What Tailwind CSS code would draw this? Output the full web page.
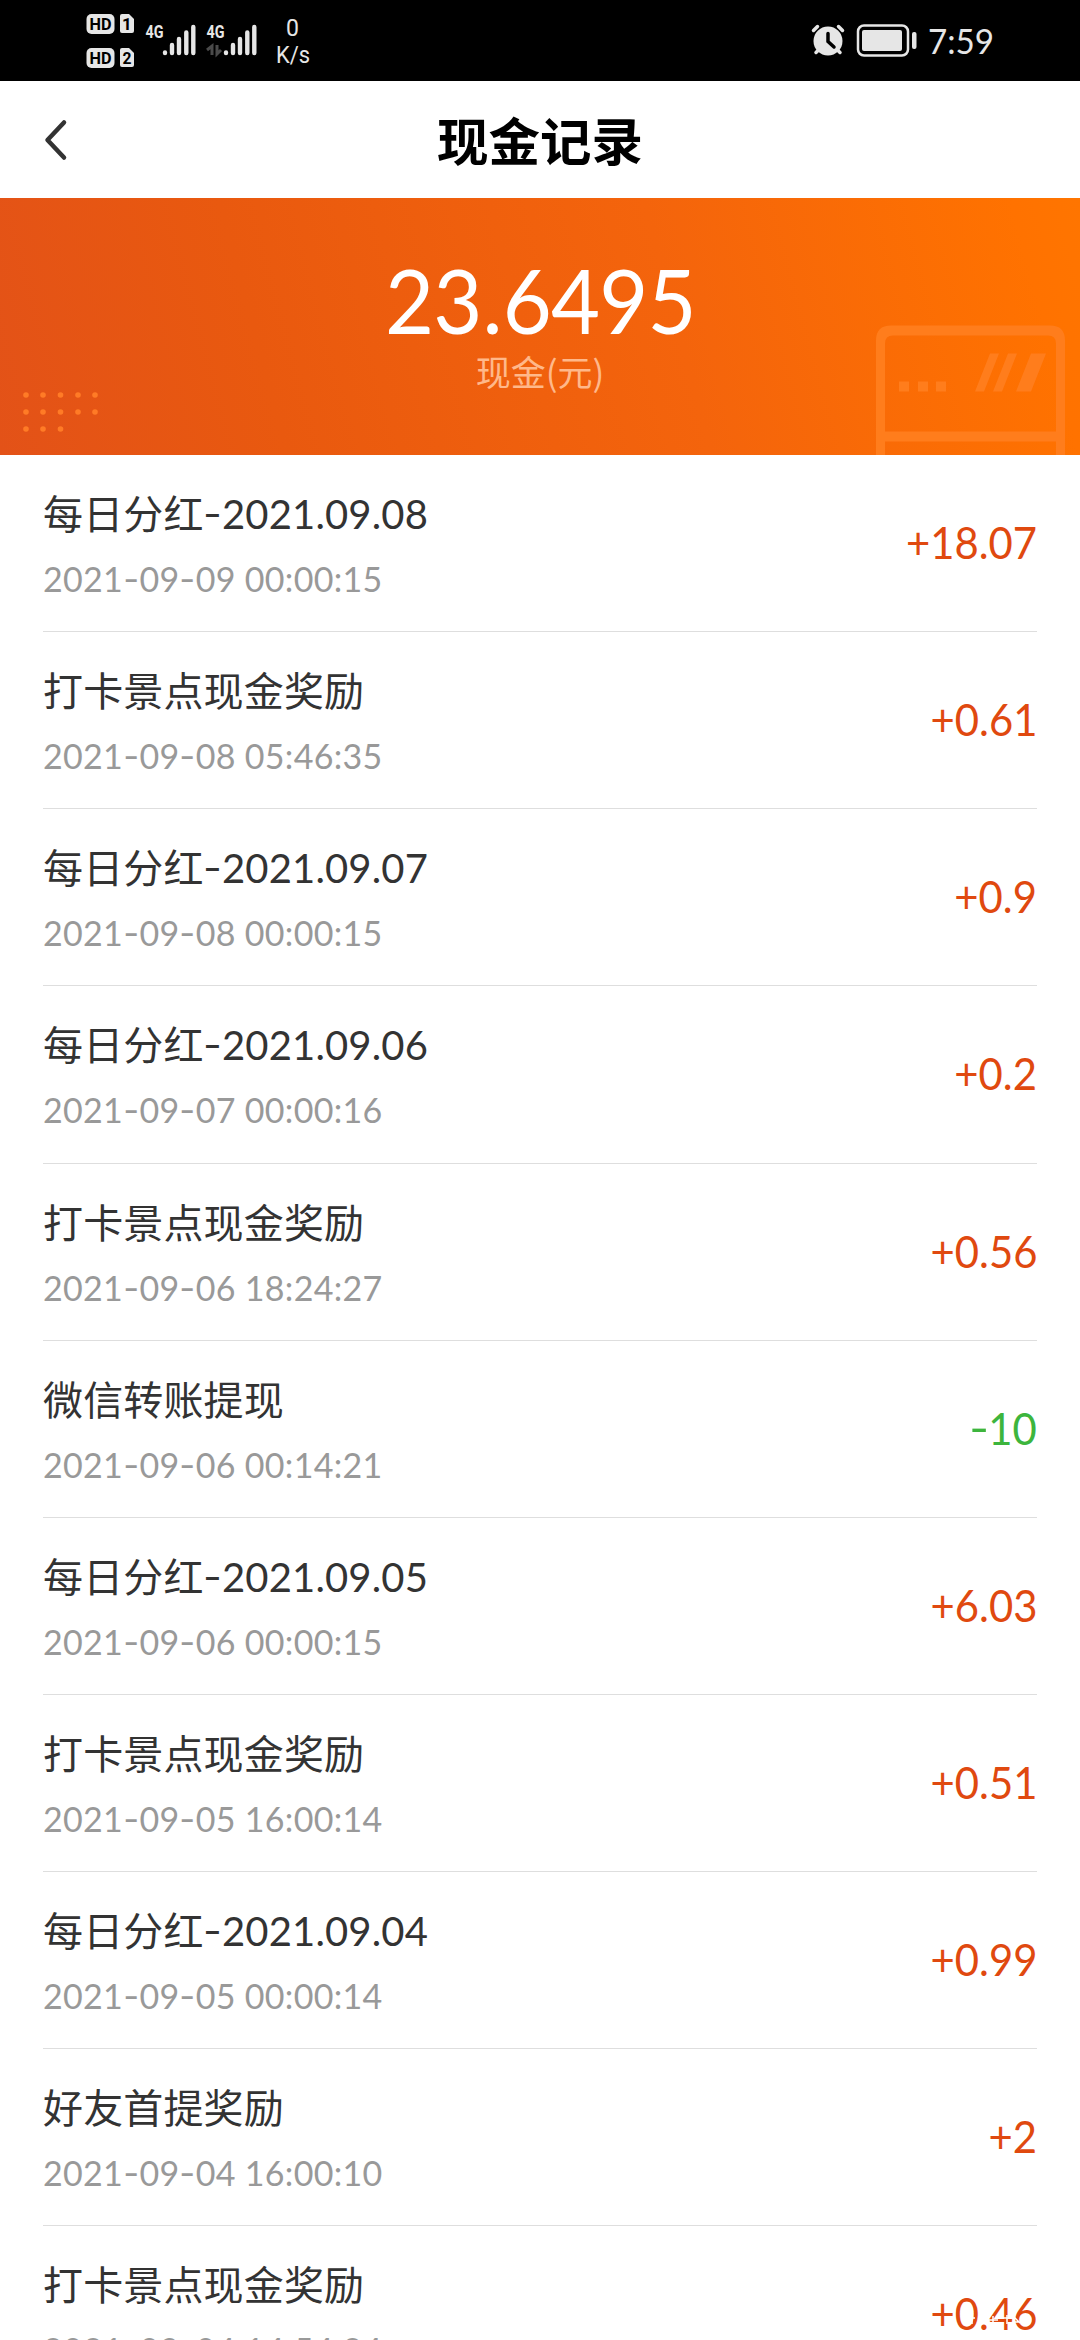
<!DOCTYPE html>
<html lang="zh-CN">
<head>
<meta charset="utf-8">
<title>现金记录</title>
<script src="https://cdn.jsdelivr.net/npm/@tailwindcss/browser@4"></script>
</head>
<body class="w-[1080px] h-[2340px] overflow-hidden bg-white font-['Lato','Noto_Sans_CJK_SC',sans-serif]">
<div class="relative w-[1080px] h-[2340px] overflow-hidden flex flex-col">
  <div class="h-[81px] shrink-0 bg-black">
    <svg class="block" width="1080" height="81" viewBox="0 0 1080 81" fill="#e6e6e6">
      <!-- HD / SIM badges -->
      <rect x="86.500" y="14" width="28" height="20" rx="5"/>
      <rect x="86.500" y="48" width="28" height="20" rx="5"/>
      <path d="M122 14h7l5 5v12a2 2 0 0 1-2 2h-10a2 2 0 0 1-2-2V16a2 2 0 0 1 2-2z"/>
      <path d="M122 48h7l5 5v12a2 2 0 0 1-2 2h-10a2 2 0 0 1-2-2V50a2 2 0 0 1 2-2z"/>
      <g fill="#000" font-family="Roboto" font-weight="700">
        <text x="89.500" y="30" font-size="17" textLength="22" lengthAdjust="spacingAndGlyphs">HD</text>
        <text x="89.500" y="64" font-size="17" textLength="22" lengthAdjust="spacingAndGlyphs">HD</text>
        <text x="122" y="30" font-size="17">1</text>
        <text x="122.500" y="64" font-size="17" textLength="9" lengthAdjust="spacingAndGlyphs">2</text>
      </g>
      <g font-family="Roboto" font-weight="700" font-size="19">
        <text x="145.500" y="38" textLength="18" lengthAdjust="spacingAndGlyphs">4G</text>
        <text x="206.500" y="38" textLength="18" lengthAdjust="spacingAndGlyphs">4G</text>
      </g>
      <g stroke="#e6e6e6" stroke-width="4.400" stroke-linecap="round">
        <path d="M165 52.500v.5M172 45v8M179 39v14M186.300 32.500v20.500M193.300 27v26"/>
        <path d="M226 52.500v.5M233 45v8M240 39v14M247.300 32.500v20.500M254.300 27v26"/>
      </g>
      <path d="M207 50l5-4v9M217 45v9l4-4" fill="none" stroke="#4a4a4a" stroke-width="3"/>
      <g font-family="Roboto" text-anchor="middle">
        <text x="292.500" y="36" font-size="23">0</text>
        <text x="293" y="63" font-size="23" textLength="34" lengthAdjust="spacingAndGlyphs">K/s</text>
      </g>
      <!-- alarm -->
      <circle cx="828" cy="41" r="14.500"/>
      <path d="M813.500 30.500l4-4M842.500 30.500l-4-4M816 52.500l4-4M840 52.500l-4-4" stroke="#e6e6e6" stroke-width="3.500" stroke-linecap="round"/>
      <path d="M828 33.500v8l6 5.500" fill="none" stroke="#000" stroke-width="3.500" stroke-linecap="round"/>
      <!-- battery -->
      <rect x="858" y="25.500" width="50" height="30" rx="6" fill="none" stroke="#e6e6e6" stroke-width="2.500"/>
      <rect x="862" y="30" width="40" height="21" rx="2"/>
      <rect x="912" y="32" width="4.500" height="17" rx="2"/>
      <text x="928" y="54" font-family="Lato" font-size="35" textLength="66" lengthAdjust="spacingAndGlyphs">7:59</text>
    </svg>
  </div>

  <div class="h-[117px] shrink-0 grid grid-cols-3 items-center">
    <svg class="ml-[39px]" width="34" height="48" viewBox="0 0 34 48" fill="none" stroke="#333" stroke-width="4.500" stroke-linecap="round" stroke-linejoin="round"><path d="M25 6.500L8.500 24L25 41.500"/></svg>
    <h1 class="text-center text-[51.5px] leading-[60px] font-bold text-black whitespace-nowrap pt-[2px]">现金记录</h1>
  </div>

  <div class="relative h-[257px] shrink-0 bg-linear-[75deg,#e35218_0%,#e9590f_25%,#f4640c_62%,#ff7200_94%,#ff7500_100%] flex flex-col items-center pt-[60px] text-white">
    <svg class="absolute inset-0" width="1080" height="257" viewBox="0 0 1080 257">
      <g fill="#ff7b26">
        <circle cx="26" cy="197" r="2.800"/><circle cx="43" cy="197" r="2.800"/><circle cx="60.500" cy="197" r="2.800"/><circle cx="78" cy="197" r="2.800"/><circle cx="95" cy="197" r="2.800"/>
        <circle cx="26" cy="214" r="2.800"/><circle cx="43" cy="214" r="2.800"/><circle cx="60.500" cy="214" r="2.800"/><circle cx="78" cy="214" r="2.800"/><circle cx="95" cy="214" r="2.800"/>
        <circle cx="26" cy="231" r="2.800"/><circle cx="43" cy="231" r="2.800"/><circle cx="60.500" cy="231" r="2.800"/>
      </g>
      <g fill="#ff7d1c" transform="translate(0 1.500)">
        <path fill-rule="evenodd" d="M876 257V141q0-15 15-15h159q15 0 15 15v116h-9v-15H885v15zM885 232h171v-88q0-8-8-8H893q-8 0-8 8z"/>
        <path d="M899 182h10v10h-10zM918 182h10v10h-10zM936 182h10v10h-10zM990 154h9l-15 38h-9zM1008 154h9l-15 38h-9zM1031 154h15l-15 38h-15z"/>
      </g>
    </svg>
    <div class="relative text-[90px] leading-[82px] tracking-[-0.8px] scale-x-94">23<span class="mx-[1px]">.</span>6495</div>
    <div class="relative text-[35px] leading-[48px] pt-[7px] text-[#ffb88a] font-['Noto_Sans_CJK_SC',sans-serif]">现金(元)</div>
  </div>

  <ul id="list" class="px-[43px] shrink-0"></ul>

  <!-- faint mark over the last amount -->
  <svg class="absolute left-[966px] top-[2312px]" width="60" height="14" viewBox="0 0 60 14" fill="none" stroke="#fff" stroke-width="1.500"><path d="M1 6h8M6 3v9M23 8h9M27 4v8M36 6h6M41 3v9M48 5l6 6M47 10h6"/></svg>
</div>
<script>
const rows = [
  ['每日分红-2021.09.08','2021-09-09 00:00:15','+18.07'],
  ['打卡景点现金奖励','2021-09-08 05:46:35','+0.61'],
  ['每日分红-2021.09.07','2021-09-08 00:00:15','+0.9'],
  ['每日分红-2021.09.06','2021-09-07 00:00:16','+0.2'],
  ['打卡景点现金奖励','2021-09-06 18:24:27','+0.56'],
  ['微信转账提现','2021-09-06 00:14:21','-10'],
  ['每日分红-2021.09.05','2021-09-06 00:00:15','+6.03'],
  ['打卡景点现金奖励','2021-09-05 16:00:14','+0.51'],
  ['每日分红-2021.09.04','2021-09-05 00:00:14','+0.99'],
  ['好友首提奖励','2021-09-04 16:00:10','+2'],
  ['打卡景点现金奖励','2021-09-04 14:54:24','+0.46'],
];
const dash = s => s.replace(/-/g, '<span class="inline-block scale-x-130 mx-[1.7px] -translate-y-px">-</span>');
document.getElementById('list').innerHTML = rows.map(([t, d, a]) => `
  <li class="h-[177.15px] border-b-[1.5px] border-[#dedede] flex justify-between">
    <div class="pt-[29px]">
      <div class="text-[40px] leading-[60px] tracking-[0.15px] text-[#333]">${dash(t)}</div>
      <div class="text-[34px] leading-[50px] pt-[10px] tracking-[0.3px] text-[#999]">${dash(d)}</div>
    </div>
    <div class="self-center -mt-[2px] text-[44px] leading-[60px] origin-right scale-x-95 ${a[0] === '-' ? 'text-[#3db53d]' : 'text-[#e0490f]'}">${dash(a)}</div>
  </li>`).join('');
</script>
</body>
</html>
